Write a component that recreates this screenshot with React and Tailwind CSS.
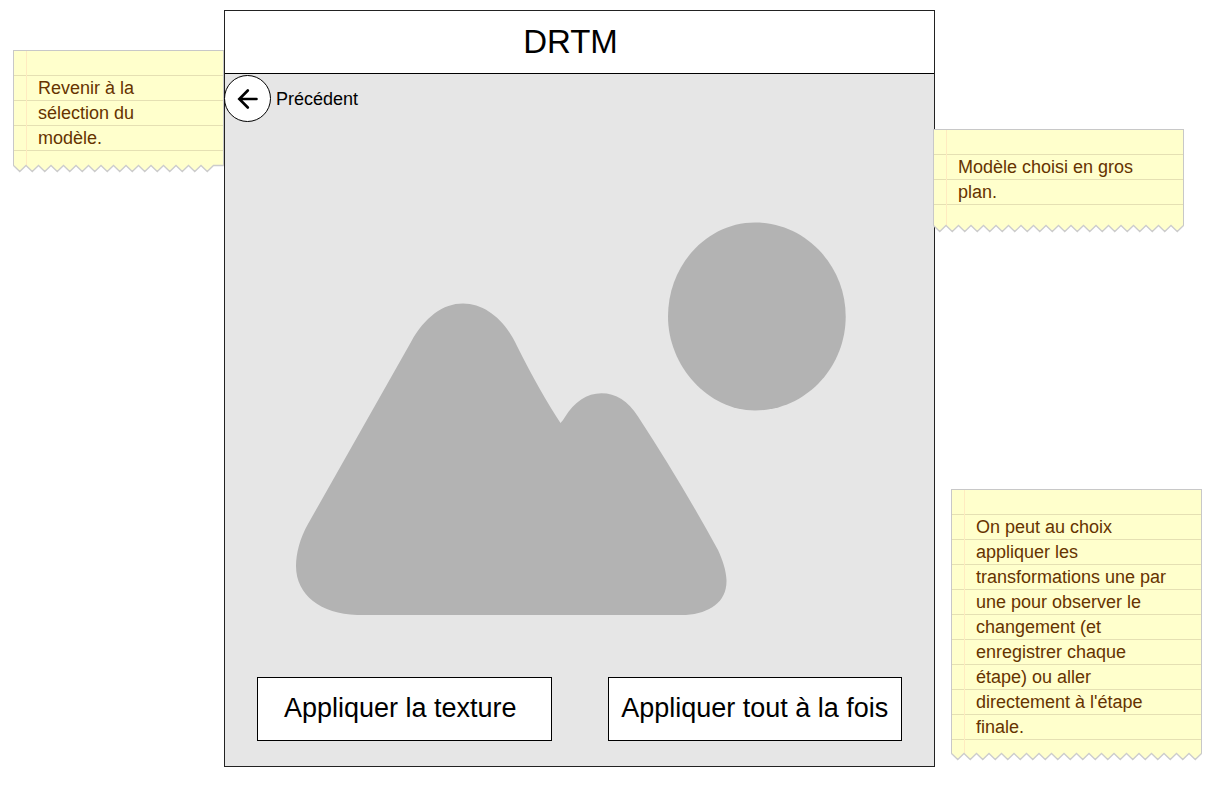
const TOOTH = 12.5;

function TornEdge({ width, teeth }) {
  let line = "M0.5 0";
  for (let i = 0; i < teeth; i++) {
    const x = i * TOOTH;
    line += ` L${x + TOOTH / 2 + 0.5} 6 L${Math.min(x + TOOTH + 0.5, width - 0.5)} 0`;
  }
  const end = teeth * TOOTH < width - 1 ? ` L${width} 0` : "";
  return (
    <svg
      className="relative -mt-px block overflow-visible"
      width={width}
      height="7"
      viewBox={`0 -0.5 ${width} 7`}
      aria-hidden="true"
    >
      <path d={line + end} fill="#ffffcc" stroke="#cccccc" strokeWidth="1.3" />
    </svg>
  );
}

function Note({ children, width, teeth, className, bodyClassName }) {
  return (
    <aside className={`relative z-10 ${className}`}>
      <div
        className={`relative border border-b-0 border-[#c8c8c8] bg-[#ffffcc] bg-[repeating-linear-gradient(to_bottom,transparent_0,transparent_24px,#e5e0b3_24px,#e5e0b3_25px)] px-6 pt-[25px] text-[18px] leading-[25px] text-[#663300] ${bodyClassName}`}
      >
        <span className="absolute inset-y-0 left-3 w-px bg-[#ffebc0]" />
        <p>{children}</p>
      </div>
      <TornEdge width={width} teeth={teeth} />
    </aside>
  );
}

function BackArrow() {
  return (
    <svg
      width="22"
      height="22"
      viewBox="0 0 22 22"
      fill="none"
      stroke="#000"
      strokeWidth="2.6"
      strokeLinecap="round"
      aria-hidden="true"
    >
      <path d="M2.5 11H19.500M10.800 2.500L2.300 11L10.800 19.500" />
    </svg>
  );
}

function ModelPreview() {
  return (
    <svg className="block w-full" viewBox="225 122 709 555" fill="#b3b3b3" role="img" aria-label="Modèle">
      <path d="M755 222.500C805 222.500 845.700 265 845.700 316.500C845.700 368 805 410.500 755 410.500C708 410.500 668 366 668 316.500C668 265 707 222.500 755 222.500Z" />
      <path d="M357 615H686C710 613 727 602 726.5 580C726 570 723 561 718 550Q682 484 638 416.500C628 401 616 393.200 601.500 393.200C587 393.200 574 402 565 417Q563 420.500 560.500 423Q540 392 517 346C505 320 485 303.600 463 303.600C443 303.600 425 317 411 342L308 524C300 538 296 553 296 566C296 595 321 614 357 615Z" />
    </svg>
  );
}

const actionClass =
  "h-16 whitespace-nowrap border border-black bg-white pb-0.5 text-[27px] leading-8 text-black";

export default function App() {
  return (
    <div className="grid grid-cols-[211px_minmax(0,1fr)_283px] items-start bg-white pt-[10px] pb-8 pl-[13px] font-['Liberation_Sans',Arial,sans-serif] text-black">
      <div className="pt-10">
        <Note width={211} teeth={16} className="w-[211px]" bodyClassName="pb-[15px]">
          Revenir à la sélection du modèle.
        </Note>
      </div>

      <main className="border border-[#222222] bg-[#e6e6e6]">
        <header className="flex h-[63px] items-center justify-center border-b border-black bg-white pr-[18px]">
          <h1 className="text-[33px] leading-10">DRTM</h1>
        </header>
        <div className="pt-px">
          <button type="button" className="-ml-px flex items-center gap-[5px] text-[18px] leading-6">
            <span className="flex size-[47px] items-center justify-center rounded-full border border-black bg-white">
              <BackArrow />
            </span>
            Précédent
          </button>
        </div>
        <ModelPreview />
        <div className="grid grid-cols-2 gap-14 px-8 pb-[25px]">
          <button type="button" className={`${actionClass} pr-2`}>
            Appliquer la texture
          </button>
          <button type="button" className={actionClass}>
            Appliquer tout à la fois
          </button>
        </div>
      </main>

      <div className="flex flex-col gap-[257px] pt-[119px]">
        <Note width={251} teeth={20} className="-ml-0.5 w-[251px]" bodyClassName="pb-[21px]">
          Modèle choisi en gros plan.
        </Note>
        <Note width={251} teeth={20} className="ml-4 w-[251px]" bodyClassName="pb-[14px]">
          On peut au choix appliquer les transformations une par une pour observer le changement (et enregistrer chaque
          étape) ou aller directement à l'étape finale.
        </Note>
      </div>
    </div>
  );
}
